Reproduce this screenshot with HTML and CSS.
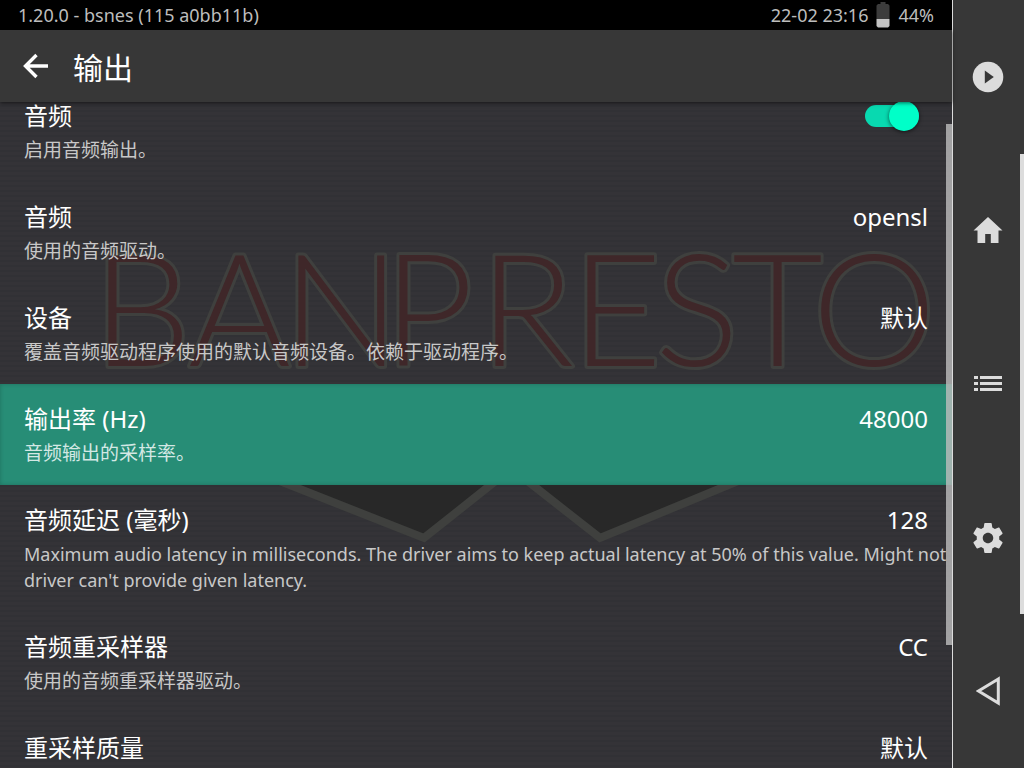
FILE: index.html
```html
<!DOCTYPE html>
<html lang="zh-CN">
<head>
    <meta charset="UTF-8">
    <meta name="viewport" content="width=device-width, initial-scale=1.0">
    <title>输出</title>
    <link rel="stylesheet" href="styles.css">
</head>
<body>

    <div class="app">
        <div class="status-bar">
            <span>1.20.0 - bsnes (115 a0bb11b)</span>
            <div class="status-right">
                <span>22-02 23:16</span>
                <svg class="battery" width="14" height="26" viewBox="0 0 14 26" aria-hidden="true">
                    <path d="M4.500 0h5v2h2.500l1.500 1.500V17H.5V3.500L2 2h2.500z" fill="#3c3c3c"/>
                    <path d="M.5 17h13v7l-1.500 1.500H2L.5 24z" fill="#c4c4c4"/>
                </svg>
                <span>44%</span>
            </div>
        </div>

        <header class="header">
            <button class="back" type="button" aria-label="返回">
                <svg width="26" height="26" viewBox="0 0 26 26" aria-hidden="true">
                    <path d="M25 13H3M13.500 2L2.500 13l11 11" fill="none" stroke="#fff" stroke-width="3.400"/>
                </svg>
            </button>
            <h1>输出</h1>
        </header>

        <main class="content">
            <!-- Game logo behind the list -->
            <svg class="backdrop" viewBox="0 0 952 666" aria-hidden="true">
                <g class="logo">
                    <text x="92 188 282 383 479 571 655 732 812" y="264">BANPRESTO</text>
                </g>
                <g fill="#282828" stroke="#3f403e" stroke-width="8">
                    <path d="M272 376L424 436L507 370z"/>
                    <path d="M516 370L600 436L760 370z"/>
                </g>
            </svg>

            <div class="list">
                <label class="row">
                    <span class="title">音频</span>
                    <input class="switch" type="checkbox" checked>
                    <span class="summary">启用音频输出。</span>
                </label>
                <button class="row" type="button">
                    <span class="title">音频</span>
                    <span class="value">opensl</span>
                    <span class="summary">使用的音频驱动。</span>
                </button>
                <button class="row" type="button">
                    <span class="title">设备</span>
                    <span class="value">默认</span>
                    <span class="summary">覆盖音频驱动程序使用的默认音频设备。依赖于驱动程序。</span>
                </button>
                <button class="row selected" type="button">
                    <span class="title">输出率 (Hz)</span>
                    <span class="value">48000</span>
                    <span class="summary">音频输出的采样率。</span>
                </button>
                <button class="row" type="button">
                    <span class="title">音频延迟 (毫秒)</span>
                    <span class="value">128</span>
                    <span class="summary" lang="en">Maximum audio latency in milliseconds. The driver aims to keep actual latency at 50% of this value. Might not be honored if the audio<br>driver can't provide given latency.</span>
                </button>
                <button class="row" type="button">
                    <span class="title">音频重采样器</span>
                    <span class="value">CC</span>
                    <span class="summary">使用的音频重采样器驱动。</span>
                </button>
                <button class="row" type="button">
                    <span class="title">重采样质量</span>
                    <span class="value">默认</span>
                </button>
            </div>
            <div class="scrollbar"></div>
        </main>
    </div>

    <nav class="nav">
        <button type="button" aria-label="继续">
            <svg width="32" height="32" viewBox="0 0 32 32" aria-hidden="true">
                <circle cx="16" cy="16" r="15.300" fill="#dcdcdc"/>
                <path d="M12.800 9.500l9 6.500-9 6.500z" fill="#373737"/>
            </svg>
        </button>
        <button type="button" aria-label="主页">
            <svg width="30" height="28" viewBox="0 0 30 28" aria-hidden="true">
                <path d="M15 1L.5 14.500h4V27h7.700v-9h5.600v9h7.700V14.500h4z" fill="#dcdcdc"/>
            </svg>
        </button>
        <button type="button" aria-label="列表">
            <svg width="28" height="16" viewBox="0 0 28 16" aria-hidden="true">
                <path d="M0 0h4v3H0zM6 0h22v3H6zM0 6h4v3H0zM6 6h22v3H6zM0 12h4v3H0zM6 12h22v3H6z" fill="#dcdcdc"/>
            </svg>
        </button>
        <button type="button" aria-label="设置">
            <svg width="36" height="36" viewBox="0 0 24 24" aria-hidden="true">
                <path fill="#dcdcdc" d="M19.430 12.980c.04-.32.07-.64.07-.98s-.03-.66-.07-.98l2.110-1.650c.19-.15.24-.42.12-.64l-2-3.460c-.12-.22-.39-.3-.61-.22l-2.490 1c-.52-.4-1.080-.73-1.690-.98l-.38-2.650C14.460 2.180 14.250 2 14 2h-4c-.25 0-.46.18-.49.42l-.38 2.650c-.61.25-1.170.59-1.690.98l-2.490-1c-.23-.09-.49 0-.61.22l-2 3.460c-.13.22-.07.49.12.64l2.110 1.650c-.04.32-.07.65-.07.98s.03.66.07.98l-2.110 1.650c-.19.15-.24.42-.12.64l2 3.460c.12.22.39.3.61.22l2.490-1c.52.4 1.080.73 1.690.98l.38 2.650c.03.24.24.42.49.42h4c.25 0 .46-.18.49-.42l.38-2.650c.61-.25 1.170-.59 1.690-.98l2.490 1c.23.09.49 0 .61-.22l2-3.460c.12-.22.07-.49-.12-.64l-2.110-1.650zM12 15.500c-1.930 0-3.500-1.570-3.500-3.500s1.570-3.500 3.500-3.500 3.500 1.570 3.500 3.500-1.570 3.500-3.500 3.500z"/>
            </svg>
        </button>
        <button type="button" aria-label="后退">
            <svg width="24" height="30" viewBox="0 0 24 30" aria-hidden="true">
                <path d="M22.300 3L2.500 15l19.800 12z" fill="none" stroke="#dcdcdc" stroke-width="3"/>
            </svg>
        </button>
        <div class="nav-scrollbar"></div>
    </nav>

</body>
</html>
```

FILE: styles.css
```css
* {
    box-sizing: border-box;
}

body {
    display: flex;
    height: 100vh;
    margin: 0;
    overflow: hidden;
    background-color: #373737;
    color: #fff;
    font-family: "Noto Sans", "Noto Sans CJK SC", sans-serif;
}

button {
    padding: 0;
    border: none;
    background: none;
    color: inherit;
    font: inherit;
    cursor: pointer;
}

svg {
    display: block;
}

.app {
    display: flex;
    flex: 1;
    flex-direction: column;
    min-width: 0;
}

.status-bar {
    display: flex;
    justify-content: space-between;
    align-items: center;
    height: 30px;
    padding: 0 18px;
    background-color: #000;
    color: #bdbdbd;
    font-size: 18px;
}

.status-right {
    display: flex;
    align-items: center;
    gap: 8px;
}

.header {
    display: flex;
    align-items: center;
    gap: 24px;
    height: 72px;
    padding: 0 23px;
    background-color: #373737;
    box-shadow: 0 1px 4px rgba(0, 0, 0, 0.6);
    z-index: 1;
}

.header h1 {
    margin: 0;
    font-size: 30px;
    font-weight: 400;
}

.content {
    position: relative;
    flex: 1;
    min-height: 0;
    overflow: hidden;
    background: repeating-linear-gradient(#343337 0, #343337 3px, #313135 3px, #313135 5px);
}

.backdrop {
    position: absolute;
    top: 0;
    left: 0;
    width: 100%;
}

.logo {
    fill: #3f2729;
    stroke: #3f403e;
    stroke-width: 6px;
    stroke-linejoin: round;
    paint-order: stroke;
    font-family: Lato, sans-serif;
    font-size: 157px;
    font-weight: 300;
}

/* The list is scrolled a little, its first row sits under the header */
.list {
    position: relative;
    display: flex;
    flex-direction: column;
    margin-top: -21px;
}

.row {
    display: grid;
    grid-template-columns: 1fr auto;
    row-gap: 4px;
    padding: 18px 24px 19px;
    text-align: left;
    cursor: pointer;
}

.title,
.value {
    font-size: 24px;
    line-height: 34px;
}

.summary {
    grid-column: 1 / -1;
    min-width: 0;
    color: #c8c8c8;
    font-size: 19px;
    line-height: 26px;
    white-space: nowrap;
}

.summary:lang(en) {
    font-size: 18px;
}

.selected {
    background-color: #278d76;
    box-shadow: inset 0 0 4px rgba(0, 0, 0, 0.2);
}

.selected .summary {
    color: #d4e8e4;
}

.switch {
    appearance: none;
    align-self: center;
    display: flex;
    align-items: center;
    width: 54px;
    height: 22px;
    margin: 0 9px 0 0;
    border-radius: 11px;
    background-color: #08d9b0;
    cursor: pointer;
}

.switch::before {
    content: "";
    width: 30px;
    height: 30px;
    border-radius: 50%;
    background-color: #00ffc8;
    box-shadow: 0 1px 4px rgba(0, 0, 0, 0.6);
}

.switch:checked {
    justify-content: flex-end;
}

.scrollbar {
    position: absolute;
    top: 22px;
    right: 0;
    bottom: 123px;
    width: 6px;
    background-color: rgba(190, 190, 190, 0.8);
}

.nav {
    position: relative;
    display: flex;
    flex-direction: column;
    width: 72px;
    padding-right: 2px;
    border-left: 1px solid #dcdcdc;
    background-color: #373737;
}

.nav button {
    display: flex;
    flex: 1;
    justify-content: center;
    align-items: center;
}

.nav-scrollbar {
    position: absolute;
    top: 20%;
    right: 0;
    width: 4px;
    height: 60%;
    background-color: #dcdcdc;
}
```
